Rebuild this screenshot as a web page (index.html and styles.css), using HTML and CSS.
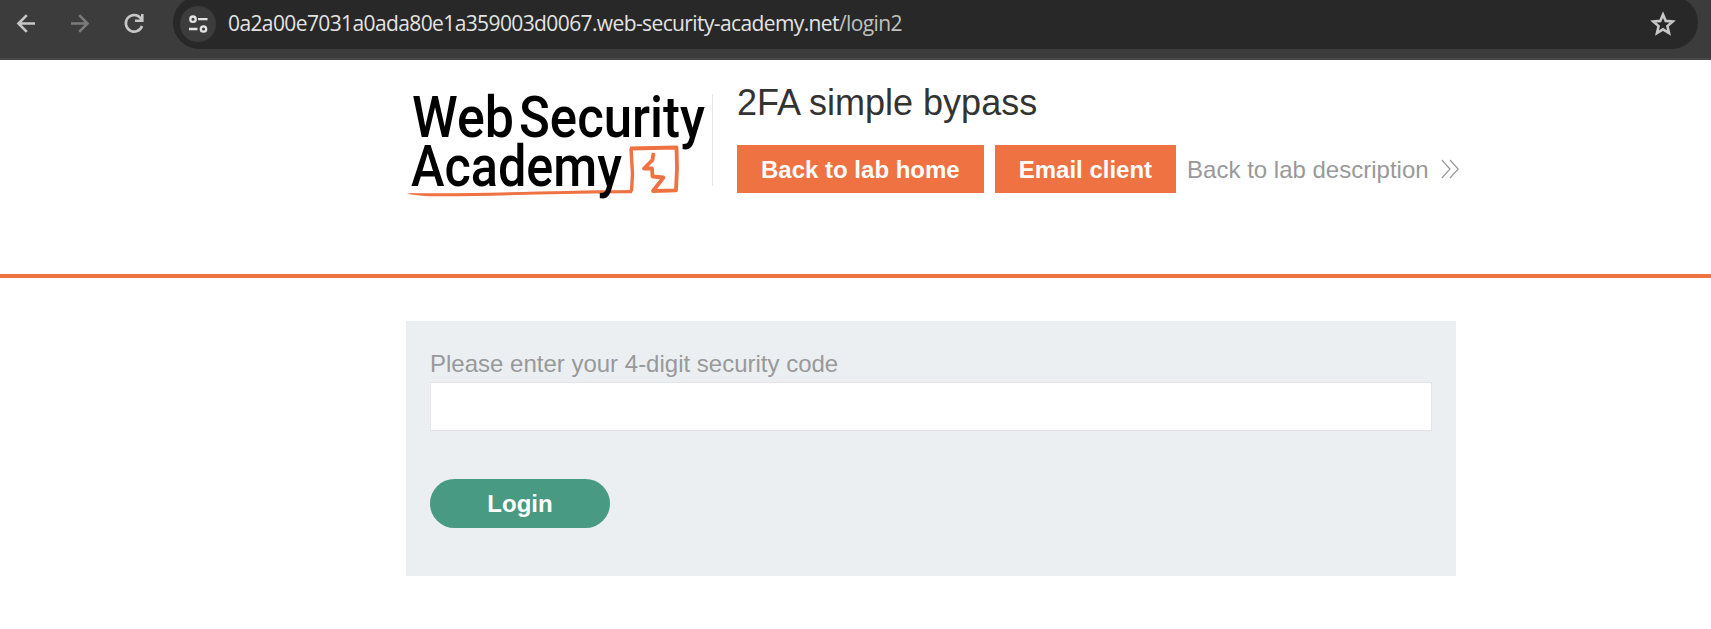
FILE: index.html
```html
<!DOCTYPE html>
<html lang="en">
<head>
<meta charset="utf-8">
<title>2FA simple bypass</title>
<link rel="stylesheet" href="styles.css">
</head>
<body>
<div class="toolbar">
  <svg class="nav" width="173" height="48" viewBox="0 0 173 48" fill="none" stroke-width="2.6">
    <path stroke="#c7c7c7" d="M35 23.500H18.500M26.800 15.200L18.500 23.500L26.800 31.800"/>
    <path stroke="#7b7b7b" d="M71 23.500H87.500M79.200 15.200L87.500 23.500L79.200 31.800"/>
    <path stroke="#c7c7c7" d="M142 26A8.300 8.300 0 1 1 140.500 18L142.300 20.500M142.300 14V20.800H135"/>
  </svg>
  <div class="omnibox">
    <span class="site">
      <svg width="36" height="36" viewBox="0 0 36 36" fill="none" stroke="#e3e3e3" stroke-width="2.300">
        <circle cx="13" cy="13.200" r="2.700"/><path d="M18 13.200H27.500M9 23H17.500"/><circle cx="23.500" cy="23" r="2.700"/>
      </svg>
    </span>
    <span class="url">0a2a00e7031a0ada80e1a359003d0067.web-security-academy.net<span class="path">/login2</span></span>
    <svg class="star" width="28" height="28" viewBox="0 0 28 28" fill="none" stroke="#c7c7c7" stroke-width="2.600">
      <path d="M14 4.500L16.700 10.900L23.700 11.500L18.400 16.100L20 23L14 19.300L8 23L9.600 16.100L4.300 11.500L11.300 10.900Z"/>
    </svg>
  </div>
</div>
<header class="header">
  <div class="inner">
    <svg class="logo" width="306" height="112" viewBox="406 90 306 112">
      <g class="mark" fill="none" stroke="#ee7242">
        <path stroke-width="3.400" d="M631.500 191.500L632.500 174L631 148.500"/>
        <path stroke-width="3.800" stroke-linejoin="round" d="M630 148.500L676.500 147.500L677 168L676 190.300L653 191L663.500 177.500L652.500 176.500L652 168.500L644 168.500L652.500 160L653.500 153"/>
        <path stroke="none" fill="#ee7242" d="M407 193C470 194.300 545 190.500 632 190V193.300C560 193 490 196.800 430 196.200Q412 195.500 407 193Z"/>
      </g>
      <g class="word">
        <text x="412" y="137" textLength="102" lengthAdjust="spacingAndGlyphs">Web</text>
        <text x="519" y="137" textLength="186" lengthAdjust="spacingAndGlyphs">Security</text>
        <text x="411" y="186.300" textLength="211" lengthAdjust="spacingAndGlyphs">Academy</text>
      </g>
    </svg>
    <div class="info">
      <h2 class="title">2FA simple bypass</h2>
      <div class="actions">
        <a class="btn">Back to lab home</a>
        <a class="btn">Email client</a>
        <a class="back">Back to lab description
          <svg width="18" height="20" viewBox="0 0 18 20" fill="none" stroke="#999" stroke-width="1.200"><path d="M.8 1L9 10L.8 19M9 1L17.200 10L9 19"/></svg>
        </a>
      </div>
    </div>
  </div>
</header>
<form class="panel">
  <label class="label" for="code">Please enter your 4-digit security code</label>
  <input class="field" id="code" type="text">
  <button class="login" type="button">Login</button>
</form>
</body>
</html>
```
FILE: styles.css
```css
* { box-sizing: border-box; }
body { margin: 0; height: 629px; overflow: hidden; background: #fff; font: 24px/27px "Liberation Sans", Arial, sans-serif; color: #333332; }
.toolbar { display: flex; height: 60px; background: #3c3c3c; border-bottom: 2px solid #474747; }
.nav { flex: none; }
.omnibox { display: flex; align-items: center; width: 1525px; height: 53px; margin-top: -4px; padding: 2px 21px 0 7px; border-radius: 27px; background: #282828; }
.site { display: flex; width: 36px; height: 36px; border-radius: 50%; background: #3c3c3c; }
.url { margin: -1px 0 0 12px; font: 21px/28px "Open Sans", "Noto Sans", sans-serif; letter-spacing: -0.61px; color: #e3e3e3; white-space: nowrap; }
.path { color: #c0c0c0; }
.star { margin-left: auto; }
.header { height: 218px; padding: 30px 0 0 406px; border-bottom: 4px solid #ee7242; }
.inner { display: flex; }
.logo { display: block; flex: none; overflow: visible; }
.word { font: 500 57px Roboto, sans-serif; fill: #000; }
.info { margin-top: 4px; height: 92px; padding-left: 24px; border-left: 1px solid #e6e6e6; }
.title { margin: -12px 0 22px; font-size: 36px; line-height: 41px; font-weight: 400; }
.actions { display: flex; align-items: center; }
.btn { height: 48px; margin-right: 11px; padding: 0 24px; line-height: 50px; background: #ee7242; color: #fff; font-weight: 700; white-space: nowrap; }
.back { display: flex; align-items: center; gap: 12px; color: #999; white-space: nowrap; }
.panel { display: flex; flex-direction: column; align-items: flex-start; width: 1050px; height: 255px; margin: 43px 0 0 406px; padding: 29px 24px 0; background: #ebeff2; }
.label { color: #999; line-height: 27px; }
.field { width: 1002px; height: 49px; margin-top: 5px; padding: 0 12px; border: 1px solid #e4e4e6; background: #fff; font: inherit; outline: 0; }
.login { width: 180px; height: 49px; margin-top: 48px; border: 0; border-radius: 25px; background: #489a82; color: #fff; font: 700 24px "Liberation Sans", Arial, sans-serif; }
```
